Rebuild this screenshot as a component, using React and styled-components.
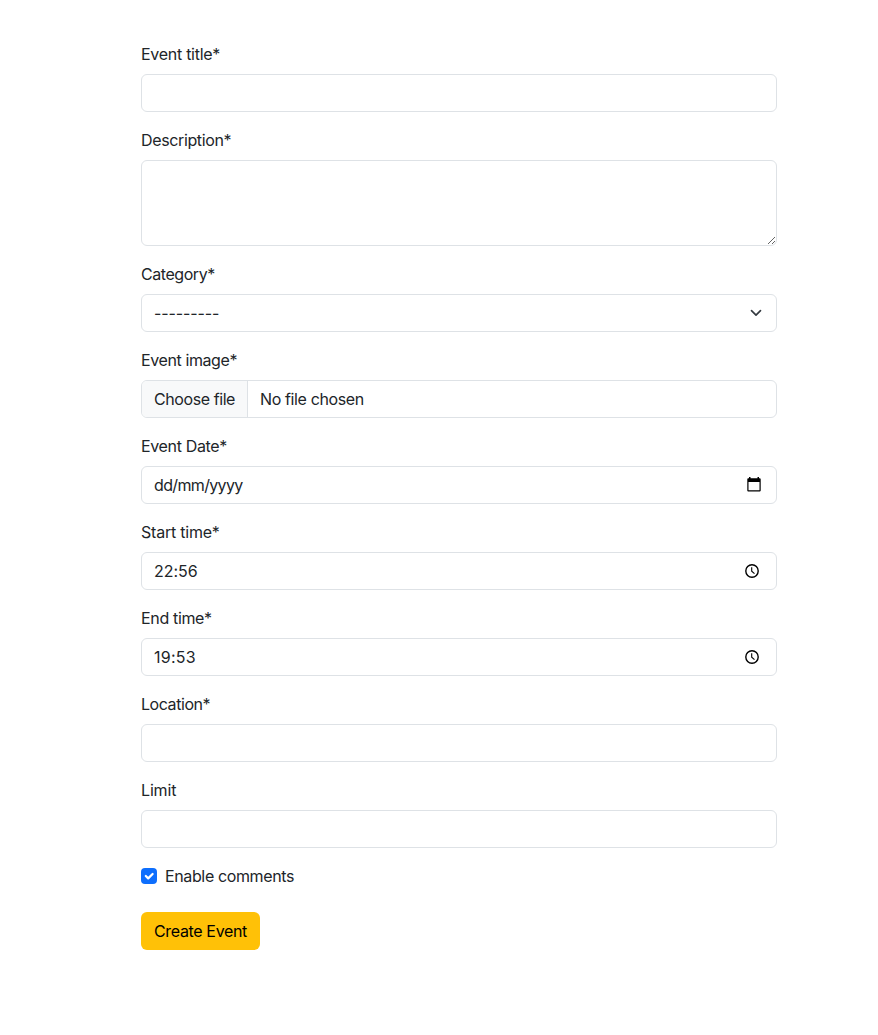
import React from "react";
import styled, { createGlobalStyle } from "styled-components";

const GlobalStyle = createGlobalStyle`
  *, *::before, *::after { box-sizing: border-box; }
  body {
    margin: 0;
    background: #fff;
    color: #212529;
    font-family: Inter, "Liberation Sans", sans-serif;
    font-size: 16px;
    line-height: 24px;
  }
`;

const Form = styled.form`
  width: 636px;
  margin: 42px 0 0 141px;
`;

const Field = styled.div`
  display: flex;
  flex-direction: column;
  align-items: stretch;
  margin-bottom: 16px;
`;

const Text = styled.span`
  letter-spacing: ${(p) => p.$track || 0}px;
  white-space: nowrap;
`;

const Label = styled.label`
  height: 24px;
  margin-bottom: 8px;
`;

const control = `
  width: 100%;
  border: 1px solid #dee2e6;
  border-radius: 6px;
  background: #fff;
  color: #212529;
  font: inherit;
  outline: none;
`;

const Input = styled.input`
  ${control}
  height: 38px;
  padding: 6px 12px;
`;

const TextArea = styled.textarea`
  ${control}
  display: block;
  height: 86px;
  padding: 6px 12px;
  resize: vertical;
`;

const Picker = styled.div`
  ${control}
  display: flex;
  align-items: center;
  justify-content: space-between;
  height: 38px;
  padding: 0 ${(p) => p.$end}px 0 12px;
  svg { display: block; flex: none; }
`;

const FileInput = styled.div`
  ${control}
  display: flex;
  height: 38px;
  overflow: hidden;
`;

const FileButton = styled.div`
  width: 106px;
  padding: 6px 0 6px 12px;
  border-right: 1px solid #dee2e6;
  background: #f8f9fa;
`;

const FileName = styled.div`
  padding: 6px 12px;
`;

const CheckRow = styled.div`
  display: flex;
  align-items: center;
  gap: 8px;
  height: 24px;
  margin-bottom: 24px;
`;

const CheckBox = styled.span`
  width: 16px;
  height: 16px;
  border-radius: 4px;
  background: #0d6efd;
  svg { display: block; }
`;

const Submit = styled.button`
  display: block;
  width: 119px;
  height: 38px;
  padding: 0 0 0 13px;
  border: 0;
  border-radius: 6px;
  background: #ffc107;
  color: #000;
  font: inherit;
  text-align: left;
`;

const Chevron = () => (
  <svg width="16" height="12" viewBox="0 0 16 12" fill="none">
    <path d="m3.500 3.700 4.500 4.500 4.500-4.500" stroke="#343a40" strokeWidth="1.650" strokeLinecap="round" strokeLinejoin="round" />
  </svg>
);

const Calendar = () => (
  <svg width="14" height="16" viewBox="0 0 14 16">
    <path d="M2 0h1.500v1.300h7V0H12v1.300h.8c.5 0 .9.4.9.9v11.400c0 .5-.4.9-.9.9H1.200c-.5 0-.9-.4-.9-.9V2.200c0-.5.4-.9.9-.9H2zM1.500 5v8.300h11V5z" fillRule="evenodd" />
  </svg>
);

const Clock = () => (
  <svg width="16" height="16" viewBox="0 0 16 16" fill="none" stroke="#000">
    <circle cx="8" cy="8" r="6.200" strokeWidth="1.400" />
    <path d="M7.700 4.200v4l2.800 2.400" strokeWidth="1.100" />
  </svg>
);

const Tick = () => (
  <svg width="16" height="16" viewBox="0 0 20 20" fill="none">
    <path d="m6 10 3 3 5.500-5.500" stroke="#fff" strokeWidth="2.800" strokeLinecap="round" strokeLinejoin="round" />
  </svg>
);

function Labelled({ label, track, children }) {
  return (
    <Field>
      <Label><Text $track={track}>{label}</Text></Label>
      {children}
    </Field>
  );
}

export default function App() {
  return (
    <>
      <GlobalStyle />
      <Form>
        <Labelled label="Event title*" track={-0.28}><Input /></Labelled>
        <Labelled label="Description*" track={-0.37}><TextArea /></Labelled>
        <Labelled label="Category*" track={-0.44}>
          <Picker $end={12}><Text $track={-0.12}>---------</Text><Chevron /></Picker>
        </Labelled>
        <Labelled label="Event image*" track={-0.4}>
          <FileInput>
            <FileButton><Text $track={-0.42}>Choose file</Text></FileButton>
            <FileName><Text $track={-0.37}>No file chosen</Text></FileName>
          </FileInput>
        </Labelled>
        <Labelled label="Event Date*" track={-0.35}>
          <Picker $end={15}><Text $track={-0.65}>dd/mm/yyyy</Text><Calendar /></Picker>
        </Labelled>
        <Labelled label="Start time*" track={-0.22}>
          <Picker $end={16}><Text $track={-0.05}>22:56</Text><Clock /></Picker>
        </Labelled>
        <Labelled label="End time*" track={-0.34}>
          <Picker $end={16}><Text $track={0.25}>19:53</Text><Clock /></Picker>
        </Labelled>
        <Labelled label="Location*" track={-0.44}><Input /></Labelled>
        <Labelled label="Limit" track={-0.15}><Input /></Labelled>
        <CheckRow>
          <CheckBox><Tick /></CheckBox>
          <Text $track={-0.37}>Enable comments</Text>
        </CheckRow>
        <Submit type="button"><Text $track={-0.35}>Create Event</Text></Submit>
      </Form>
    </>
  );
}
